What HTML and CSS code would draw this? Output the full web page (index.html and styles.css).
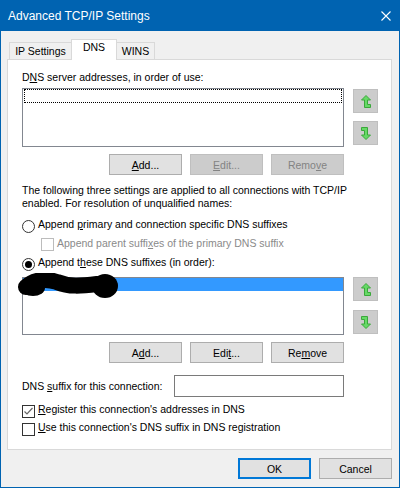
FILE: index.html
```html
<!DOCTYPE html>
<html>
<head>
    <title>Advanced TCP/IP Settings</title>
    <link rel="stylesheet" href="styles.css">
</head>
<body>
    <div class="window">
        <div class="titlebar">
            <span>Advanced TCP/IP Settings</span>
            <svg class="close" width="10" height="10" viewBox="0 0 10 10"><path d="M0.5 0.5 L9.5 9.5 M9.5 0.5 L0.5 9.5" stroke="#fff" stroke-width="1.1"/></svg>
        </div>
        <div class="client">
            <div class="tabs">
                <div class="tab tab-ip">IP Settings</div>
                <div class="tab tab-dns active">DNS</div>
                <div class="tab tab-wins">WINS</div>
            </div>
            <div class="panel">
                <div class="label">D<u>N</u>S server addresses, in order of use:</div>
                <div class="list-row first">
                    <div class="listbox"><div class="focus-item"></div></div>
                    <div class="move-btns">
                        <button class="move" disabled>
                            <svg width="10" height="13" viewBox="0 0 10 13"><path d="M5 0.5 L9.5 5 L6.5 5 L6.5 9.5 L9.5 9.5 L9.5 12.5 L3.5 12.5 L3.5 5 L0.5 5 Z" fill="#66d966" stroke="#3aa83a" stroke-width="1" stroke-linejoin="round"/></svg>
                        </button>
                        <button class="move" disabled>
                            <svg width="10" height="13" viewBox="0 0 10 13"><path d="M0.5 0.5 L6.5 0.5 L6.5 8 L9.5 8 L5 12.5 L0.5 8 L3.5 8 L3.5 3.5 L0.5 3.5 Z" fill="#66d966" stroke="#3aa83a" stroke-width="1" stroke-linejoin="round"/></svg>
                        </button>
                    </div>
                </div>
                <div class="btn-row">
                    <button class="btn"><u>A</u>dd...</button>
                    <button class="btn" disabled><u>E</u>dit...</button>
                    <button class="btn" disabled>Remo<u>v</u>e</button>
                </div>

                <div class="para">The following three settings are applied to all connections with TCP/IP<br>enabled. For resolution of unqualified names:</div>

                <div class="opt">
                    <span class="radio"></span>
                    <span class="opt-text">Append <u>p</u>rimary and connection specific DNS suffixes</span>
                </div>
                <div class="opt sub disabled">
                    <span class="check"></span>
                    <span class="opt-text">Append parent suffi<u>x</u>es of the primary DNS suffix</span>
                </div>
                <div class="opt">
                    <span class="radio on"></span>
                    <span class="opt-text">Append t<u>h</u>ese DNS suffixes (in order):</span>
                </div>

                <div class="list-row second">
                    <div class="listbox short">
                        <div class="sel-item"></div>
                        <svg class="scribble" width="104" height="27" viewBox="0 0 104 27">
                            <path d="M9 14 C16 7, 28 5, 40 9 C52 14, 64 13, 80 11" fill="none" stroke="#000" stroke-width="16" stroke-linecap="round"/>
                            <ellipse cx="88" cy="13" rx="13" ry="12" fill="#000"/>
                            <ellipse cx="16" cy="15" rx="12" ry="8" fill="#000"/>
                        </svg>
                    </div>
                    <div class="move-btns">
                        <button class="move" disabled>
                            <svg width="10" height="13" viewBox="0 0 10 13"><path d="M5 0.5 L9.5 5 L6.5 5 L6.5 9.5 L9.5 9.5 L9.5 12.5 L3.5 12.5 L3.5 5 L0.5 5 Z" fill="#66d966" stroke="#3aa83a" stroke-width="1" stroke-linejoin="round"/></svg>
                        </button>
                        <button class="move" disabled>
                            <svg width="10" height="13" viewBox="0 0 10 13"><path d="M0.5 0.5 L6.5 0.5 L6.5 8 L9.5 8 L5 12.5 L0.5 8 L3.5 8 L3.5 3.5 L0.5 3.5 Z" fill="#66d966" stroke="#3aa83a" stroke-width="1" stroke-linejoin="round"/></svg>
                        </button>
                    </div>
                </div>
                <div class="btn-row">
                    <button class="btn">A<u>d</u>d...</button>
                    <button class="btn">Edi<u>t</u>...</button>
                    <button class="btn">Re<u>m</u>ove</button>
                </div>

                <div class="suffix-row">
                    <span>DNS <u>s</u>uffix for this connection:</span>
                    <input type="text" class="textbox">
                </div>

                <div class="opt reg">
                    <span class="check dark">
                        <svg width="11" height="11" viewBox="0 0 11 11"><path d="M1.5 5.5 L4 8 L9.5 2" fill="none" stroke="#666" stroke-width="1.2"/></svg>
                    </span>
                    <span class="opt-text"><u>R</u>egister this connection's addresses in DNS</span>
                </div>
                <div class="opt reg">
                    <span class="check dark"></span>
                    <span class="opt-text"><u>U</u>se this connection's DNS suffix in DNS registration</span>
                </div>
            </div>

            <div class="footer">
                <button class="btn default">OK</button>
                <button class="btn">Cancel</button>
            </div>
        </div>
    </div>
</body>
</html>
```

FILE: styles.css
```css
body { margin: 0; font-family: "Liberation Sans", Arial, sans-serif; font-size: 10.5px; color: #000; background: #f0f0f0; }
u { text-decoration: underline; text-underline-offset: 1px; }

.window { width: 400px; height: 488px; box-sizing: border-box; border: 1px solid #0063b1; border-top: none; background: #f0f0f0; }
.titlebar { height: 31px; background: #0063b1; color: #fff; font-size: 12px; display: flex; align-items: center; justify-content: space-between; padding: 0 9px 0 8px; margin: 0 -1px; }
.titlebar .close { margin-top: 1px; }

.client { padding: 8px 7px 0 6px; }

.tabs { display: flex; align-items: flex-start; height: 21px; margin: 0 0 -1px 2px; position: relative; z-index: 1; }
.tab { box-sizing: border-box; height: 17px; margin-top: 3px; border: 1px solid #d9d9d9; border-bottom: none; background: #f0f0f0; padding-top: 1px; line-height: 15px; text-align: center; }
.tab-ip { width: 63px; }
.tab-dns { width: 46px; margin-left: -1px; }
.tab-wins { width: 39px; margin-left: -1px; }
.tab.active { height: 21px; margin-top: 0; padding-top: 0; background: #fff; position: relative; z-index: 2; }

.panel { box-sizing: border-box; width: 385px; height: 391px; background: #fff; border: 1px solid #d9d9d9; padding: 10px 0 0 14px; }
.label { line-height: 15px; }

.list-row { display: flex; align-items: flex-start; margin-top: 3px; }
.listbox { box-sizing: border-box; width: 322px; height: 59px; border: 1px solid #828790; background: #fff; position: relative; }
.listbox.short { height: 58px; }
.focus-item { height: 14px; margin: 0 1px 0 1px; outline: 1px dotted #000; outline-offset: -1px; }
.sel-item { height: 13px; background: #3399ff; }
.scribble { position: absolute; left: -6px; top: -5px; }

.move-btns { display: flex; flex-direction: column; gap: 8px; margin-left: 9px; margin-top: 1px; }
.second .move-btns { margin-top: 0; gap: 9px; }
.move { box-sizing: border-box; width: 25px; height: 24px; padding: 0; background: #cccccc; border: 1px solid #bfbfbf; display: flex; align-items: center; justify-content: center; }

.btn-row { width: 322px; display: flex; justify-content: flex-end; gap: 8px; margin-top: 7px; }
.btn { box-sizing: border-box; width: 73px; height: 21px; padding: 0; font: inherit; color: #000; background: #e1e1e1; border: 1px solid #adadad; }
.btn:disabled { background: #cccccc; border-color: #bfbfbf; color: #838383; }

.para { margin-top: 9px; line-height: 13px; white-space: nowrap; }

.opt { display: flex; align-items: flex-start; height: 19px; }
.para + .opt { margin-top: 7px; }
.opt-text { line-height: 15px; margin-left: 3px; }
.radio { box-sizing: border-box; width: 13px; height: 13px; margin-top: 3px; border: 1px solid #333; border-radius: 50%; display: flex; align-items: center; justify-content: center; }
.radio.on::after { content: ""; width: 7px; height: 7px; border-radius: 50%; background: #000; }
.check { box-sizing: border-box; width: 13px; height: 13px; margin-top: 2px; border: 1px solid #bcbcbc; background: #fff; display: flex; align-items: center; justify-content: center; }
.check.dark { border-color: #333; margin-top: 3px; }
.opt.sub { padding-left: 19px; }
.opt.disabled .opt-text { color: #8a8a8a; }

.suffix-row { width: 322px; display: flex; align-items: center; justify-content: space-between; margin-top: 12px; height: 22px; }
.textbox { box-sizing: border-box; width: 170px; height: 22px; border: 1px solid #7a7a7a; padding: 0 3px; font: inherit; outline: none; }

.opt.reg { height: 18px; }
.suffix-row + .opt.reg { margin-top: 5px; }

.footer { display: flex; justify-content: flex-end; gap: 8px; margin-top: 8px; }
.btn.default { border: 2px solid #0078d7; }
```
